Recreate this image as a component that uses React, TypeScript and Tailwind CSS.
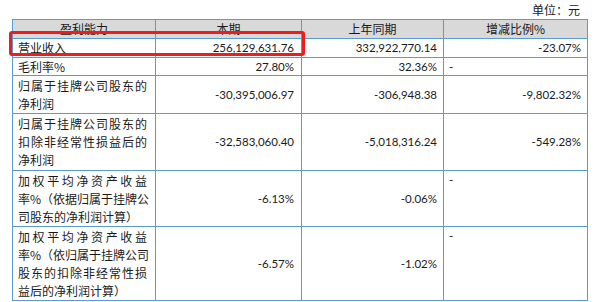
const cjk = "font-['Noto_Sans_CJK_SC',sans-serif]";
const num = "font-['Lato','Noto_Sans_CJK_SC',sans-serif]";

type Row = {
  label: string[];
  cur: string;
  prev: string;
  change: string;
  h: string;
  dashTop?: boolean;
};

const rows: Row[] = [
  { label: ["营业收入"], cur: "256,129,631.76", prev: "332,922,770.14", change: "-23.07%", h: "h-[18px]" },
  { label: ["毛利率%"], cur: "27.80%", prev: "32.36%", change: "-", h: "h-[17px]" },
  {
    label: ["归属于挂牌公司股东的", "净利润"],
    cur: "-30,395,006.97",
    prev: "-306,948.38",
    change: "-9,802.32%",
    h: "h-[37px]",
  },
  {
    label: ["归属于挂牌公司股东的", "扣除非经常性损益后的", "净利润"],
    cur: "-32,583,060.40",
    prev: "-5,018,316.24",
    change: "-549.28%",
    h: "h-[56px]",
  },
  {
    label: ["加权平均净资产收益", "率%（依据归属于挂牌公", "司股东的净利润计算）"],
    cur: "-6.13%",
    prev: "-0.06%",
    change: "-",
    h: "h-[55px]",
    dashTop: true,
  },
  {
    label: ["加权平均净资产收益", "率%（依归属于挂牌公司", "股东的扣除非经常性损", "益后的净利润计算）"],
    cur: "-6.57%",
    prev: "-1.02%",
    change: "-",
    h: "h-[73px]",
    dashTop: true,
  },
];

function Label({ lines }: { lines: string[] }) {
  return (
    <div className="w-[129px]">
      {lines.map((l, i) => (
        <div
          key={i}
          className={
            i < lines.length - 1
              ? "whitespace-nowrap text-justify [text-align-last:justify]"
              : "whitespace-nowrap"
          }
        >
          {l}
        </div>
      ))}
    </div>
  );
}

export default function App() {
  const cell = "border-r border-b border-[#5b9bd5]";
  return (
    <div className={`relative w-[609px] h-[302px] bg-white text-[#1a1a1a] ${cjk}`}>
      {/* unit */}
      <div className="h-[19px] flex items-center justify-end pr-[29px] text-[12px] leading-none">
        单位：元
      </div>

      {/* table */}
      <div className="ml-[12px] w-[576px] grid grid-cols-[143px_146px_142px_144px] border-l border-t border-[#5b9bd5] text-[12px] leading-[18px]">
        {["盈利能力", "本期", "上年同期", "增减比例%"].map((t) => (
          <div key={t} className={`${cell} h-[19px] bg-[#d9d9d9] flex items-center justify-center`}>
            {t}
          </div>
        ))}

        {rows.map((r) => (
          <div key={r.cur} className="contents">
            <div className={`${cell} ${r.h} box-content flex items-center pl-[5px]`}>
              <Label lines={r.label} />
            </div>
            <div className={`${cell} ${r.h} box-content flex items-center justify-end pr-[7px] ${num} text-[11.5px]`}>
              {r.cur}
            </div>
            <div className={`${cell} ${r.h} box-content flex items-center justify-end pr-[6px] ${num} text-[11.5px]`}>
              {r.prev}
            </div>
            {r.change === "-" ? (
              <div
                className={`${cell} ${r.h} box-content flex ${r.dashTop ? "items-start" : "items-center"} pl-[5px] ${num} text-[11.5px]`}
              >
                -
              </div>
            ) : (
              <div className={`${cell} ${r.h} box-content flex items-center justify-end pr-[6px] ${num} text-[11.5px]`}>
                {r.change}
              </div>
            )}
          </div>
        ))}
      </div>

      {/* highlight */}
      <div className="absolute left-[9px] top-[31px] w-[296px] h-[25px] border-[3px] border-[#ee1c1c] rounded-[3px]" />
    </div>
  );
}
